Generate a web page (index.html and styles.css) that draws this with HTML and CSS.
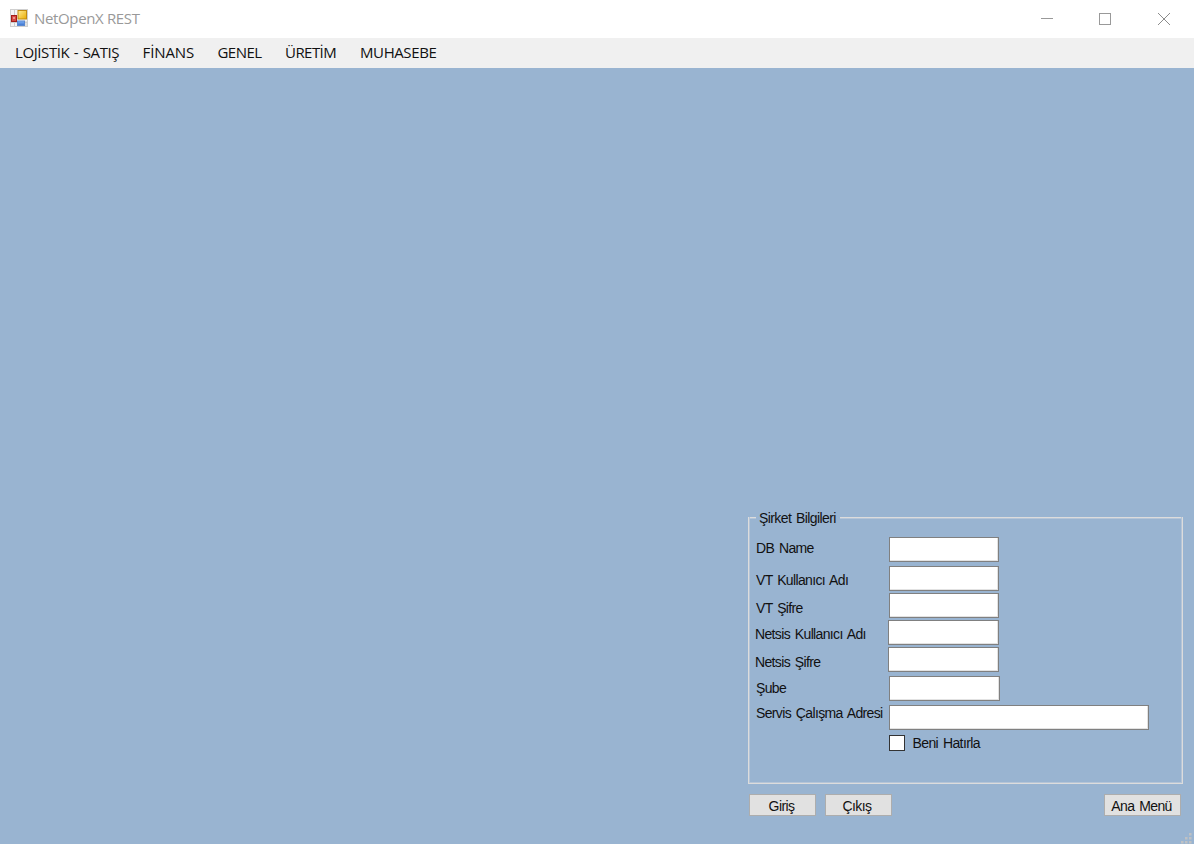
FILE: index.html
```html
<!DOCTYPE html>
<html lang="tr">
<head>
<meta charset="utf-8">
<title>NetOpenX REST</title>
<link rel="stylesheet" href="styles.css">
</head>
<body>
<div class="window">
  <header class="titlebar">
    <svg class="app-icon" width="18" height="18" viewBox="0 0 18 18">
      <defs>
        <linearGradient id="gold" x1="0" y1="0" x2="1" y2="1"><stop offset="0" stop-color="#ffec96"/><stop offset="1" stop-color="#e9ac00"/></linearGradient>
        <linearGradient id="blue" x1="0" y1="0" x2="0" y2="1"><stop offset="0" stop-color="#82b3f7"/><stop offset="1" stop-color="#3971cc"/></linearGradient>
      </defs>
      <rect x=".5" y=".5" width="17" height="17" fill="#f4f4f4" stroke="#cfcfcf"/>
      <path d="M4.500 1v16M1 13.500h16M16 12v5" stroke="#ccc"/>
      <rect x="1.500" y="6.500" width="5" height="6" fill="#d54a42" stroke="#a51c18"/>
      <rect x="3" y="8" width="2" height="2" fill="#ef9188"/>
      <rect x="8" y="1.500" width="8.500" height="8.500" fill="url(#gold)" stroke="#c18b10"/>
      <rect x="7.500" y="12" width="7" height="4.500" fill="url(#blue)" stroke="#5b88cf"/>
    </svg>
    <h1 class="title">NetOpenX REST</h1>
    <div class="controls">
      <svg width="12" height="12"><path d="M0 5.500h12" stroke="#999"/></svg>
      <svg width="12" height="12"><rect x=".5" y=".5" width="11" height="11" fill="none" stroke="#999"/></svg>
      <svg class="close" width="12" height="12"><path d="M0 0l12 12M12 0L0 12" stroke="#8c8c8c"/></svg>
    </div>
  </header>
  <nav class="menu">
    <span class="item logistics">LOJİSTİK - SATIŞ</span>
    <span class="item finance">FİNANS</span>
    <span class="item general">GENEL</span>
    <span class="item production">ÜRETİM</span>
    <span class="item accounting">MUHASEBE</span>
  </nav>
  <main class="workspace">
    <section class="panel">
      <div class="group">
        <div class="group-head"><span class="dash"></span><span class="legend">Şirket Bilgileri</span><span class="rule"></span></div>
        <div class="fields">
          <div class="row db"><label class="label">DB Name</label><input class="box"></div>
          <div class="row vt-user"><label class="label">VT Kullanıcı Adı</label><input class="box"></div>
          <div class="row vt-pass"><label class="label">VT Şifre</label><input class="box"></div>
          <div class="row wide-left net-user"><label class="label">Netsis Kullanıcı Adı</label><input class="box"></div>
          <div class="row wide-left net-pass"><label class="label">Netsis Şifre</label><input class="box"></div>
          <div class="row branch"><label class="label">Şube</label><input class="box"></div>
          <div class="row address"><label class="label">Servis Çalışma Adresi</label><input class="box"></div>
          <div class="remember"><span class="check"></span><span class="remember-text">Beni Hatırla</span></div>
        </div>
      </div>
      <div class="buttons">
        <button class="btn login">Giriş</button>
        <button class="btn exit">Çıkış</button>
        <button class="btn home">Ana Menü</button>
      </div>
    </section>
    <svg class="grip" width="12" height="12" fill="#bfc1c4"><path d="M8 0h2.500v2.500h-2.500zM4 4h2.500v2.500h-2.500zM8 4h2.500v2.500h-2.500zM0 8h2.500v2.500h-2.500zM4 8h2.500v2.500h-2.500zM8 8h2.500v2.500h-2.500z"/></svg>
  </main>
</div>
</body>
</html>
```
FILE: styles.css
```css
* { box-sizing: border-box; }
body { margin: 0; }
.window {
  width: 1194px;
  height: 844px;
  display: flex;
  flex-direction: column;
  overflow: hidden;
  background: #99b4d1;
  color: #111;
  font-family: "Liberation Sans", Arial, sans-serif;
}
.titlebar {
  height: 38px;
  display: flex;
  align-items: center;
  padding: 0 24px 0 10px;
  background: #fff;
}
.app-icon { margin-top: -2px; }
.title {
  margin: -2px 0 0 6px;
  font: 400 15px/20px "Open Sans", "Noto Sans", sans-serif;
  letter-spacing: -0.35px;
  color: #999;
}
.controls { display: flex; gap: 46px; margin-left: auto; }
.controls svg { display: block; }
.controls .close { margin-left: 1px; }
.menu {
  height: 30px;
  display: flex;
  align-items: center;
  padding: 0 0 2px 15px;
  background: #f0f0f0;
  font: 15px/20px "Open Sans", "Noto Sans", sans-serif;
}
.item { white-space: nowrap; letter-spacing: -0.55px; }
.logistics { width: 127.5px; letter-spacing: -0.4px; word-spacing: 1px; }
.finance { width: 75px; letter-spacing: -0.1px; }
.general { width: 67.5px; }
.production { width: 75px; }
.accounting { letter-spacing: -0.4px; }
.workspace { position: relative; flex: 1; padding: 442px 11px 0 748px; }
.panel { width: 435px; }
.group {
  height: 274px;
  display: flex;
  flex-direction: column;
}
.group-head { height: 7px; display: flex; align-items: flex-start; }
.dash, .rule {
  height: 2px;
  margin-top: 7px;
  border-top: 1px solid #dcdcdc;
  background: #b5c5d8;
}
.dash { width: 8px; }
.rule { flex: 1; }
.legend {
  width: 84px;
  padding-left: 3px;
  font-size: 14px;
  line-height: 17px;
  letter-spacing: -0.6px;
  word-spacing: 1.5px;
  white-space: nowrap;
}
.fields {
  flex: 1;
  padding: 20px 0 0 7px;
  border: 1px solid #dcdcdc;
  border-top: 0;
  box-shadow: inset 1px 0 #b5c5d8, inset -1px -1px #b5c5d8;
}
.row { height: 25px; display: flex; }
.label {
  width: 133px;
  height: 17px;
  font-size: 14px;
  line-height: 17px;
  letter-spacing: -0.65px;
  word-spacing: 1.6px;
  white-space: nowrap;
}
.box {
  width: 110px;
  height: 25px;
  padding: 0 4px;
  border: 1px solid #808080;
  border-radius: 0;
  background: #fff;
  box-shadow: inset -1px -1px #e2e2e2;
  outline: 0;
}
.db .label { margin-top: 3px; }
.vt-user { margin-top: 4px; }
.vt-user .label { margin-top: 6px; }
.vt-pass { margin-top: 2px; }
.vt-pass .label { margin-top: 7px; }
.net-user { margin-top: 2px; }
.net-user .label { margin-top: 6px; }
.net-pass { margin-top: 2px; }
.net-pass .label { margin-top: 7px; }
.wide-left { margin-left: -1px; }
.wide-left .box { width: 111px; }
.branch { margin-top: 4px; }
.branch .label { margin-top: 4px; }
.branch .box { width: 111px; }
.address { margin-top: 4px; }
.address .label { margin-top: 0; }
.address .box { width: 260px; }
.remember { display: flex; margin: 5px 0 0 133px; }
.check { width: 16px; height: 16px; border: 1px solid #333; background: #fff; }
.remember-text {
  margin-left: 7.5px;
  font-size: 14px;
  line-height: 17px;
  letter-spacing: -0.6px;
  word-spacing: 1.5px;
}
.buttons { display: flex; margin-top: 10px; padding: 0 2px 0 1px; }
.btn {
  width: 67px;
  height: 22px;
  padding: 2px 2px 0 0;
  border: 1px solid #adadad;
  border-radius: 0;
  background: #e1e1e1;
  color: #111;
  font: 14px/17px "Liberation Sans", Arial, sans-serif;
  letter-spacing: -0.6px;
  word-spacing: 1.5px;
}
.exit { margin-left: 9px; padding-right: 3px; }
.home { width: 77px; margin-left: auto; }
.grip { position: absolute; right: 1px; bottom: -1px; }
```
